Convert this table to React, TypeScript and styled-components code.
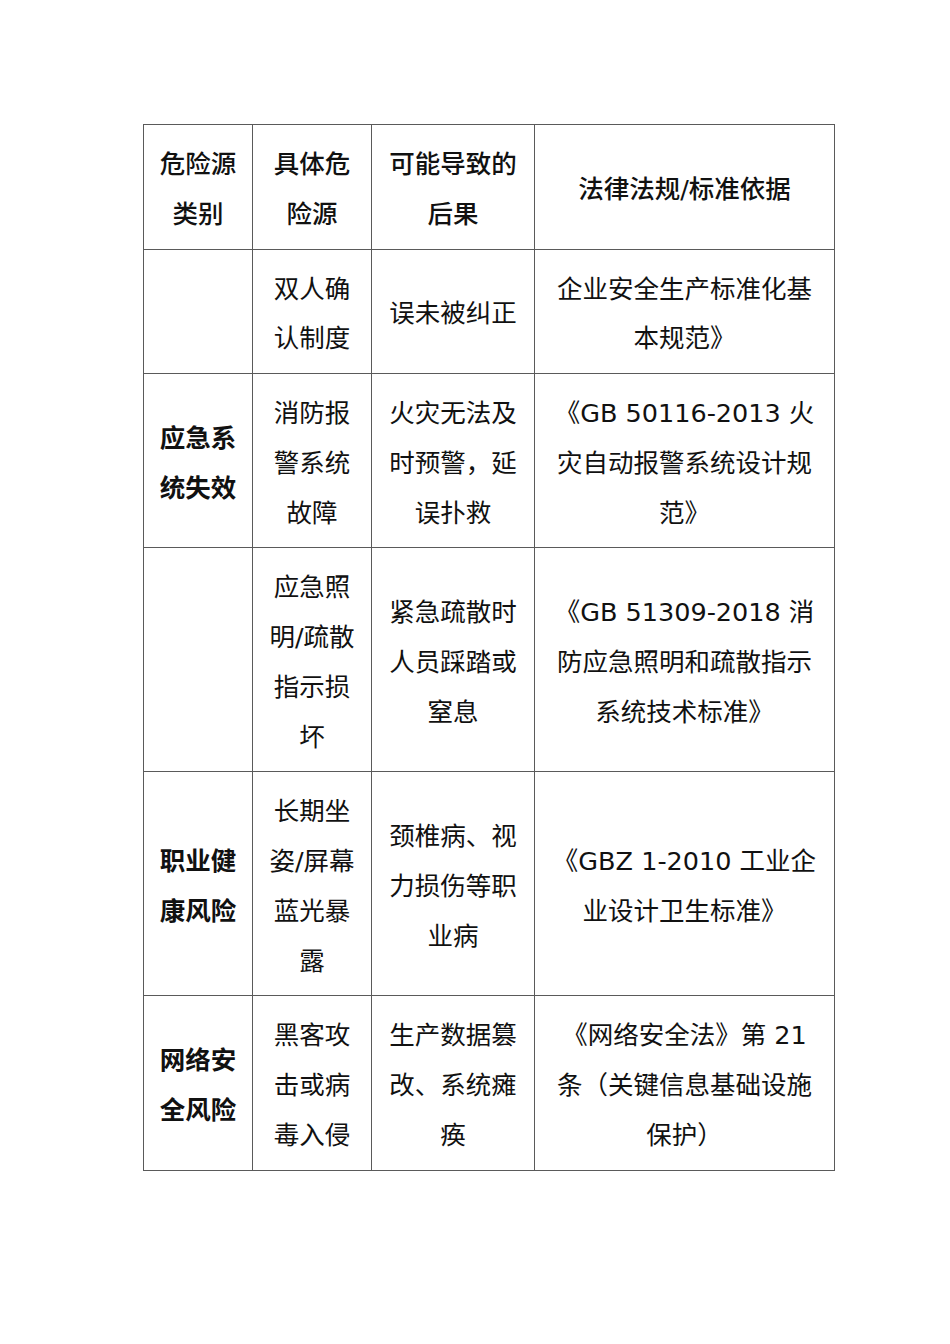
import { createGlobalStyle, styled } from 'styled-components'

interface RowData {
  category: string
  hazard: string
  result: string
  basis: string
}

const header: RowData = {
  category: '危险源类别',
  hazard: '具体危险源',
  result: '可能导致的后果',
  basis: '法律法规/标准依据',
}

const rows: RowData[] = [
  {
    category: '',
    hazard: '双人确认制度',
    result: '误未被纠正',
    basis: '企业安全生产标准化基本规范》',
  },
  {
    category: '应急系统失效',
    hazard: '消防报警系统故障',
    result: '火灾无法及时预警，延误扑救',
    basis: '《GB 50116-2013 火灾自动报警系统设计规范》',
  },
  {
    category: '',
    hazard: '应急照明/疏散指示损坏',
    result: '紧急疏散时人员踩踏或窒息',
    basis: '《GB 51309-2018 消防应急照明和疏散指示系统技术标准》',
  },
  {
    category: '职业健康风险',
    hazard: '长期坐姿/屏幕蓝光暴露',
    result: '颈椎病、视力损伤等职业病',
    basis: '《GBZ 1-2010 工业企业设计卫生标准》',
  },
  {
    category: '网络安全风险',
    hazard: '黑客攻击或病毒入侵',
    result: '生产数据篡改、系统瘫痪',
    basis: '《网络安全法》第 21 条（关键信息基础设施保护）',
  },
]

function App() {
  return (
    <>
      <GlobalStyle />
      <Page>
        <Table>
          <colgroup>
            <col style={{ width: 109 }} />
            <col style={{ width: 119 }} />
            <col style={{ width: 163 }} />
            <col style={{ width: 300 }} />
          </colgroup>
          <thead>
            <tr>
              <HeadCell>{header.category}</HeadCell>
              <HeadCell>{header.hazard}</HeadCell>
              <HeadCell>{header.result}</HeadCell>
              <HeadCell>{header.basis}</HeadCell>
            </tr>
          </thead>
          <tbody>
            {rows.map((row, i) => (
              <tr key={i}>
                <Cell $bold>{row.category}</Cell>
                <Cell>{row.hazard}</Cell>
                <Cell>{row.result}</Cell>
                <Cell>{row.basis}</Cell>
              </tr>
            ))}
          </tbody>
        </Table>
      </Page>
    </>
  )
}

const GlobalStyle = createGlobalStyle`
  body {
    margin: 0;
    background: #ffffff;
    font-family: "DejaVu Sans", "Noto Sans CJK SC", sans-serif;
    color: #111111;
  }
`

const Page = styled.div`
  width: 950px;
  min-height: 1344px;
  padding: 124px 0 0 143px;
  box-sizing: border-box;
`

const Table = styled.table`
  width: 691px;
  border-collapse: collapse;
  table-layout: fixed;
`

const Cell = styled.td<{ $bold?: boolean }>`
  border: 1px solid #5a5a5a;
  padding: 15px 13px 9px;
  text-align: center;
  vertical-align: middle;
  font-size: 25.5px;
  line-height: 49.75px;
  font-weight: ${(p) => (p.$bold ? 700 : 400)};
  word-break: break-all;
`

const HeadCell = styled.th`
  border: 1px solid #5a5a5a;
  padding: 15px 13px 9px;
  text-align: center;
  vertical-align: middle;
  font-size: 25.5px;
  line-height: 49.75px;
  font-weight: 500;
  word-break: break-all;
`

export default App
